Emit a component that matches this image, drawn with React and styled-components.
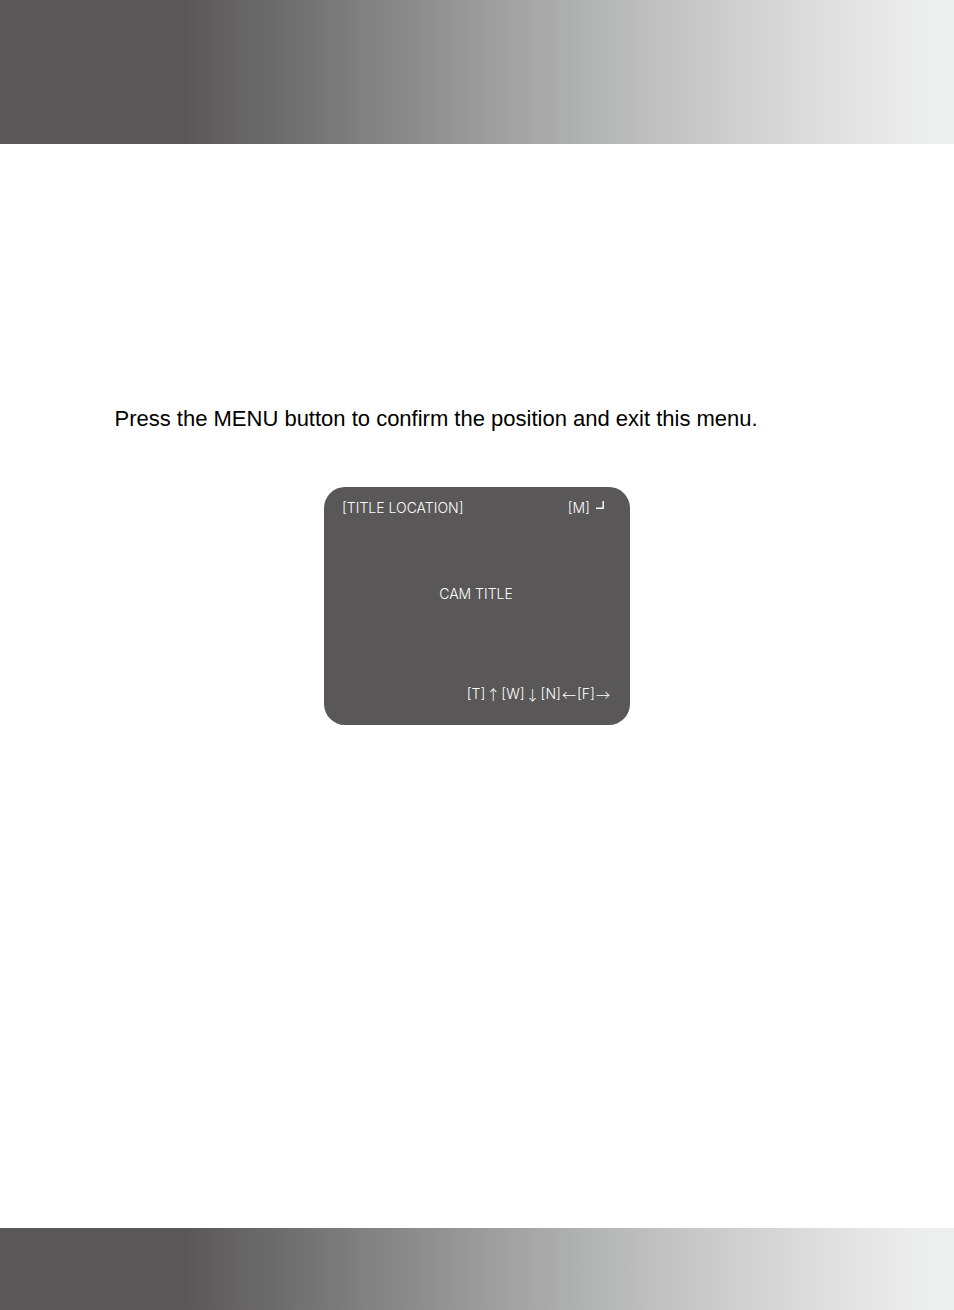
import React from "react";
import styled, { createGlobalStyle } from "styled-components";

const GlobalStyle = createGlobalStyle`
  * { box-sizing: border-box; }
  body { margin: 0; background: #fff; }
`;

const Page = styled.div`
  min-height: 100vh;
  display: flex;
  flex-direction: column;
`;

const Band = styled.div`
  flex: none;
  height: ${(p) => p.$height}px;
  background: linear-gradient(
    90deg,
    #595757 0%,
    #595757 19%,
    #6b6a6a 28%,
    #858585 40%,
    #999a99 50%,
    #b3b4b4 62%,
    #c8c8c9 73%,
    #d8d9d8 83%,
    #e5e6e5 91%,
    #edefee 97%,
    #edefee 100%
  );
`;

const Content = styled.main`
  flex: 1;
  padding: 260px 12% 80px;
  display: flex;
  flex-direction: column;
  gap: 53px;
`;

const Instruction = styled.p`
  margin: 0;
  font: 22px/30px "Liberation Sans", Arial, sans-serif;
  color: #000;
`;

const Screen = styled.section`
  align-self: center;
  width: 306px;
  min-height: 238px;
  padding: 11px 20px 21px 18px;
  border-radius: 21px;
  background: #595757;
  color: #fff;
  font: 300 14px/20px Inter, sans-serif;
  display: flex;
  flex-direction: column;
  justify-content: space-between;
`;

const TitleBar = styled.div`
  display: flex;
  justify-content: space-between;
`;

const MenuKey = styled.span`
  display: flex;
  align-items: center;
  gap: 6px;
  padding-right: 6px;
`;

const CamTitle = styled.div`
  margin-bottom: 14px;
  text-align: center;
`;

const KeyHints = styled.div`
  display: flex;
  justify-content: flex-end;
  gap: 1px;
`;

const Arrow = styled.span`
  font-family: "Noto Sans CJK KR", sans-serif;
`;

const hints = [
  ["[T]", "↑"],
  ["[W]", "↓"],
  ["[N]", "←"],
  ["[F]", "→"],
];

export default function App() {
  return (
    <>
      <GlobalStyle />
      <Page>
        <Band as="header" $height={144} />
        <Content>
          <Instruction>
            Press the MENU button to confirm the position and exit this menu.
          </Instruction>
          <Screen aria-label="Title location">
            <TitleBar>
              <span>[TITLE LOCATION]</span>
              <MenuKey>
                [M]
                <svg width="8" height="14" viewBox="0 0 8 14" fill="none" stroke="#fff" strokeWidth="1.4" aria-hidden="true">
                  <path d="M7.2 0V7.2H0" />
                </svg>
              </MenuKey>
            </TitleBar>
            <CamTitle>CAM TITLE</CamTitle>
            <KeyHints>
              {hints.map(([key, arrow]) => (
                <React.Fragment key={key}>
                  <span>{key}</span>
                  <Arrow>{arrow}</Arrow>
                </React.Fragment>
              ))}
            </KeyHints>
          </Screen>
        </Content>
        <Band as="footer" $height={82} />
      </Page>
    </>
  );
}
